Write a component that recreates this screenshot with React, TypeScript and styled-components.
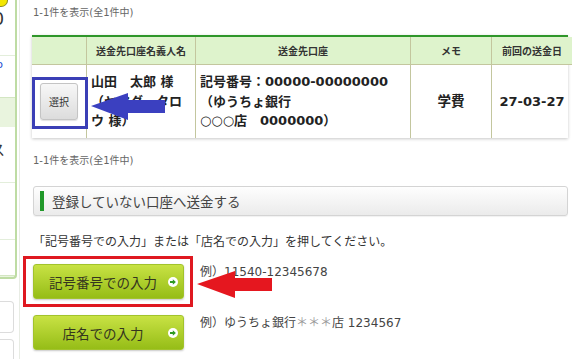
import React from "react";
import styled, { createGlobalStyle } from "styled-components";

const FONT = `"DejaVu Sans", "Noto Sans CJK JP", sans-serif`;

const GlobalStyle = createGlobalStyle`
  html, body { margin: 0; padding: 0; background: #fff; }
  body { font-family: ${FONT}; color: #333; overflow: hidden; }
`;

const Page = styled.div`
  position: relative;
  display: flex;
  width: 581px;
  height: 359px;
  overflow: hidden;
  background: #fff;
`;

/* ---------- sidebar (cut off by the viewport) ---------- */
const Sidebar = styled.aside`
  flex: none;
  width: 19px;
  border-right: 1px solid #e8ece4;
  display: flex;
  flex-direction: column;
  overflow: hidden;
`;

const SideFrame = styled.div`
  width: 15px;
  background: #e9f4de;
  border-right: 2px solid #bedca4;
  border-bottom: 2px solid #bedca4;
  border-bottom-right-radius: 4px;
  display: flex;
  flex-direction: column;
  padding-bottom: 1px;
`;

const SidePanel = styled.div<{ $h: number }>`
  position: relative;
  height: ${(p) => p.$h}px;
  background: #fff;
  border-bottom: 1px solid #d3e6c2;
  display: flex;
  flex-direction: column;
  overflow: hidden;
`;

const SideBand = styled.div`
  height: 29px;
`;

const SideRow = styled.div<{ $h: number; $size: number; $color?: string; $pad: number; $line?: boolean }>`
  height: ${(p) => p.$h}px;
  display: flex;
  align-items: center;
  justify-content: flex-end;
  padding-right: ${(p) => p.$pad}px;
  white-space: nowrap;
  font-size: ${(p) => p.$size}px;
  color: ${(p) => p.$color || "#333"};
  border-bottom: ${(p) => (p.$line ? "1px solid #e3eedb" : "none")};
  flex: none;
`;

const Sticker = styled.div`
  position: absolute;
  left: -6px;
  top: -6px;
  width: 12px;
  height: 11px;
  border-radius: 50%;
  background: #f3e600;
  border: 1px solid #8a8a20;
`;

const SideBox = styled.div<{ $h: number }>`
  width: 13px;
  height: ${(p) => p.$h}px;
  border: 1px solid #dcdcdc;
  border-left: none;
  border-radius: 0 4px 4px 0;
  background: #fff;
  flex: none;
`;

/* ---------- main ---------- */
const Main = styled.main`
  margin-left: 12px;
  width: 536px;
  padding-top: 6px;
  display: flex;
  flex-direction: column;
`;

const Count = styled.div<{ $mt?: number }>`
  font-size: 10px;
  line-height: 14px;
  color: #666;
  padding-left: 1px;
  margin-top: ${(p) => p.$mt || 0}px;
`;

const TableCard = styled.div`
  margin-top: 15px;
  box-shadow: 0 1px 3px rgba(0, 0, 0, 0.22);
  border-top: 2px solid #2f962a;
`;

const Table = styled.table`
  width: 536px;
  border-collapse: collapse;
  table-layout: fixed;
`;

const Th = styled.th<{ $w: number }>`
  width: ${(p) => p.$w}px;
  height: 27px;
  padding: 0;
  background: #def3cc;
  font-size: 10px;
  font-weight: bold;
  color: #333;
  text-align: center;
  border-left: 1px solid #c3c69e;
  border-bottom: 1px solid #c3c69e;
  &:first-child { border-left: none; }
`;

const Td = styled.td<{ $center?: boolean }>`
  position: relative;
  height: 73px;
  padding: 0 4px;
  font-size: 13px;
  font-weight: bold;
  line-height: 19.5px;
  color: #222;
  vertical-align: middle;
  text-align: ${(p) => (p.$center ? "center" : "left")};
  border-left: 1px solid #c3c69e;
  &:first-child { border-left: none; }
`;

const SelectButton = styled.button`
  width: 38px;
  height: 37px;
  padding: 0;
  border: 1px solid #c4c4c4;
  border-radius: 3px;
  background: linear-gradient(#f7f7f7, #dcdcdc);
  box-shadow: 0 1px 1px rgba(0, 0, 0, 0.12);
  font-family: ${FONT};
  font-size: 10px;
  color: #333;
  display: block;
  margin: 0 auto;
`;

const BlueFrame = styled.div`
  position: absolute;
  left: 0;
  top: 12px;
  width: 56px;
  height: 52px;
  box-sizing: border-box;
  border: 3px solid #3b3fb6;
  pointer-events: none;
`;

const Memo = styled.span`
  font-size: 13.5px;
`;

const SectionHead = styled.div`
  margin-top: 18px;
  margin-left: 1px;
  height: 28px;
  border: 1px solid #d4d4d4;
  border-radius: 3px;
  background: linear-gradient(#fefefe, #ebebeb);
  box-shadow: 0 1px 1px rgba(0, 0, 0, 0.06);
  display: flex;
  align-items: center;
  padding-left: 6px;
`;

const GreenBar = styled.span`
  width: 4px;
  height: 20px;
  background: #21982a;
`;

const SectionTitle = styled.span`
  margin-left: 8px;
  font-size: 13.5px;
  color: #444;
`;

const Instruction = styled.p`
  margin: 17px 0 0 1px;
  font-size: 12px;
  line-height: 18px;
  color: #333;
`;

const InputRow = styled.div<{ $mt: number }>`
  margin-top: ${(p) => p.$mt}px;
  margin-left: 1px;
  display: flex;
  align-items: flex-start;
  gap: 16px;
`;

const ButtonWrap = styled.div`
  position: relative;
  flex: none;
`;

const GreenButton = styled.button`
  width: 151px;
  height: 35px;
  padding: 0 5px 0 4px;
  border: 1px solid #a2c32c;
  border-radius: 3px;
  background: linear-gradient(#c8e244, #96bd17);
  box-shadow: 0 1px 2px rgba(0, 0, 0, 0.22);
  display: grid;
  grid-template-columns: 1fr 10px;
  align-items: center;
  font-family: ${FONT};
  font-size: 13.5px;
  color: #34351f;
`;

const RedFrame = styled.div`
  position: absolute;
  left: -10px;
  top: -8px;
  width: 170px;
  height: 51px;
  box-sizing: border-box;
  border: 3px solid #df1820;
  pointer-events: none;
`;

const Example = styled.span`
  font-size: 12px;
  line-height: 16px;
  color: #444;
  white-space: nowrap;
`;

const Star = styled.span`
  color: #999;
`;

const Arrow = styled.svg<{ $x: number; $y: number }>`
  position: absolute;
  left: ${(p) => p.$x}px;
  top: ${(p) => p.$y}px;
  pointer-events: none;
`;

const GoIcon = () => (
  <svg width="10" height="10" viewBox="0 0 10 10">
    <circle cx="5" cy="5" r="5" fill="#fff" />
    <rect x="2" y="4" width="3.2" height="2" fill="#2f9a22" />
    <polygon points="4.8,2.3 7.9,5 4.8,7.7" fill="#2f9a22" />
  </svg>
);

export default function App() {
  return (
    <>
      <GlobalStyle />
      <Page>
        <Sidebar>
          <SideFrame>
            <SidePanel $h={97}>
              <Sticker />
              <SideRow $h={8} $size={10} $pad={0} />
              <SideRow $h={22} $size={17} $pad={11}>1,000</SideRow>
              <SideRow $h={25} $size={10} $pad={0} $line />
              <SideRow $h={16} $size={11} $color="#1f4fd2" $pad={12}>info</SideRow>
            </SidePanel>
            <SideBand />
            <SidePanel $h={148}>
              <SideRow $h={10} $size={10} $pad={0} />
              <SideRow $h={22} $size={15} $pad={10}>サービス</SideRow>
              <SideRow $h={23} $size={10} $pad={0} $line />
              <SideRow $h={56} $size={10} $pad={0} $line />
            </SidePanel>
          </SideFrame>
          <SideBox $h={30} style={{ marginTop: 22 }} />
          <SideBox $h={30} style={{ marginTop: 6 }} />
        </Sidebar>

        <Main>
          <Count>1-1件を表示(全1件中)</Count>

          <TableCard>
            <Table>
              <thead>
                <tr>
                  <Th $w={54} />
                  <Th $w={108}>送金先口座名義人名</Th>
                  <Th $w={214}>送金先口座</Th>
                  <Th $w={80}>メモ</Th>
                  <Th $w={80}>前回の送金日</Th>
                </tr>
              </thead>
              <tbody>
                <tr>
                  <Td>
                    <SelectButton>選択</SelectButton>
                    <BlueFrame />
                  </Td>
                  <Td>山田　太郎 様 （ヤマダ　タロウ 様）</Td>
                  <Td>
                    記号番号：00000-00000000
                    <br />
                    （ゆうちょ銀行
                    <br />
                    ○○○店　0000000）
                  </Td>
                  <Td $center>
                    <Memo>学費</Memo>
                  </Td>
                  <Td $center>27-03-27</Td>
                </tr>
              </tbody>
            </Table>
          </TableCard>

          <Count $mt={16}>1-1件を表示(全1件中)</Count>

          <SectionHead>
            <GreenBar />
            <SectionTitle>登録していない口座へ送金する</SectionTitle>
          </SectionHead>

          <Instruction>「記号番号での入力」または「店名での入力」を押してください。</Instruction>

          <InputRow $mt={13}>
            <ButtonWrap>
              <GreenButton>
                <span>記号番号での入力</span>
                <GoIcon />
              </GreenButton>
              <RedFrame />
            </ButtonWrap>
            <Example>例）11540-12345678</Example>
          </InputRow>

          <InputRow $mt={16}>
            <ButtonWrap>
              <GreenButton>
                <span>店名での入力</span>
                <GoIcon />
              </GreenButton>
            </ButtonWrap>
            <Example>
              例）ゆうちょ銀行<Star>＊＊＊</Star>店 1234567
            </Example>
          </InputRow>
        </Main>

        <Arrow $x={91} $y={93} width="74" height="27" viewBox="0 0 74 27">
          <polygon points="0,13 37,0 37,7 74,7 74,20 37,20 37,27" fill="#3b40c0" />
        </Arrow>
        <Arrow $x={197} $y={271} width="75" height="27" viewBox="0 0 75 27">
          <polygon points="0,13 38,0 38,7 75,7 75,20 38,20 38,27" fill="#e5171f" />
        </Arrow>
      </Page>
    </>
  );
}
